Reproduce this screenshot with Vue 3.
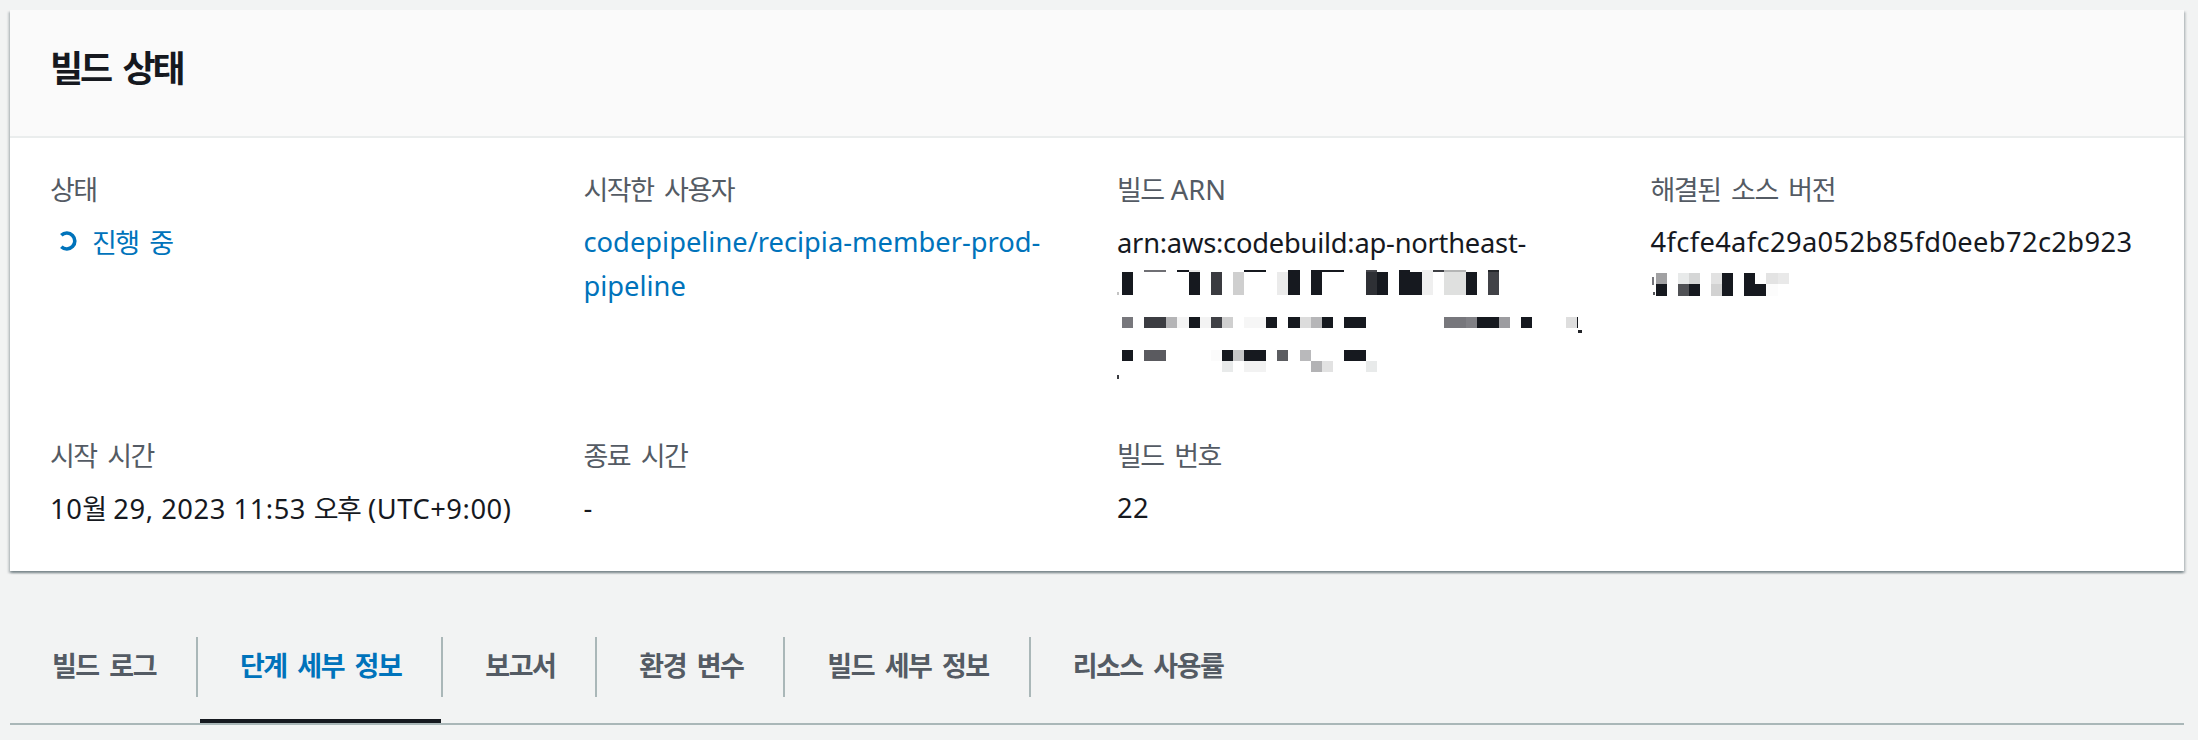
<template>
  <div class="page">
    <section class="card">
      <header class="card-head">
        <h2>빌드 상태</h2>
      </header>
      <div class="details">
        <div class="cell">
          <div class="label ko">상태</div>
          <div class="status">
            <svg class="spinner" viewBox="0 0 20 20" width="20" height="20">
              <path d="M4.3 4.2A8 8 0 1 1 4.3 15.8" fill="none" stroke="#0073bb" stroke-width="3.6" />
            </svg>
            <span class="ko">진행 중</span>
          </div>
        </div>
        <div class="cell">
          <div class="label ko">시작한 사용자</div>
          <a class="value link">codepipeline/recipia-member-prod-pipeline</a>
        </div>
        <div class="cell">
          <div class="label"><span class="ko">빌드</span> ARN</div>
          <div class="value arn-text">arn:aws:codebuild:ap-northeast-</div>
          <div class="mosaic arn">
            <i v-for="(b, i) in arnBlocks" :key="i" :style="blockStyle(b)"></i>
          </div>
        </div>
        <div class="cell">
          <div class="label ko">해결된 소스 버전</div>
          <div class="value wide">4fcfe4afc29a052b85fd0eeb72c2b923</div>
          <div class="mosaic source">
            <i v-for="(b, i) in sourceBlocks" :key="i" :style="blockStyle(b)"></i>
          </div>
        </div>
        <div class="cell">
          <div class="label ko">시작 시간</div>
          <div class="value date">10<span class="ko">월</span> 29, 2023 11:53 <span class="ko">오후</span> (UTC+9:00)</div>
        </div>
        <div class="cell">
          <div class="label ko">종료 시간</div>
          <div class="value">-</div>
        </div>
        <div class="cell">
          <div class="label ko">빌드 번호</div>
          <div class="value wide">22</div>
        </div>
      </div>
    </section>

    <nav class="tabs">
      <a
        v-for="(tab, i) in tabs"
        :key="tab"
        class="tab"
        :class="{ active: i === 1 }"
      >
        <span class="tab-label">{{ tab }}</span>
      </a>
    </nav>
  </div>
</template>

<script setup>
const tabs = ['빌드 로그', '단계 세부 정보', '보고서', '환경 변수', '빌드 세부 정보', '리소스 사용률']

const dark = '#16191f'

// c: column, s: column span, r: row, h: row span, k: colour, w/t: fixed size of a sliver
const arnBlocks = [
  // first blurred line
  { c: 0, r: 2, k: '#c4c4c4', w: 2, t: 3, m: '20px 0 0 0' },
  { c: 1, r: 2, k: dark },
  { c: 3, s: 2, r: 1, k: '#6f6f74' },
  { c: 6, r: 1, k: dark },
  { c: 7, r: 1, k: '#e8e8e8' },
  { c: 7, r: 2, k: dark },
  { c: 9, r: 2, k: '#3a3b40' },
  { c: 11, r: 2, k: '#cfcfcf' },
  { c: 12, s: 2, r: 1, k: dark },
  { c: 15, r: 2, k: '#ebebeb' },
  { c: 16, r: 1, h: 2, k: dark },
  { c: 18, r: 1, h: 2, k: dark },
  { c: 19, s: 2, r: 1, k: dark },
  { c: 23, r: 1, k: '#47484d' },
  { c: 23, r: 2, k: '#2e3035' },
  { c: 24, r: 2, k: dark },
  { c: 26, r: 1, h: 2, k: dark },
  { c: 27, r: 2, k: dark },
  { c: 28, r: 1, h: 2, k: '#efefef' },
  { c: 29, r: 1, k: '#3f4045' },
  { c: 30, s: 2, r: 1, k: '#b4b5b5' },
  { c: 30, s: 2, r: 2, k: '#dfe0df' },
  { c: 32, r: 2, k: dark },
  { c: 34, r: 1, k: '#232529' },
  { c: 34, r: 2, k: '#414247' },
  // second blurred line
  { c: 1, r: 4, k: '#77777c' },
  { c: 3, s: 2, r: 4, k: '#3c3d42' },
  { c: 5, r: 4, k: '#b4b4b6' },
  { c: 6, r: 4, k: '#f4f4f4' },
  { c: 7, r: 4, k: dark },
  { c: 8, r: 4, k: '#f3f3f3' },
  { c: 9, r: 4, k: '#3f4045' },
  { c: 10, r: 4, k: '#cfcfcf' },
  { c: 12, s: 2, r: 4, k: '#f6f6f6' },
  { c: 14, r: 4, k: dark },
  { c: 16, r: 4, k: dark },
  { c: 17, r: 4, k: '#dcdcdc' },
  { c: 18, r: 4, k: '#b6b6b8' },
  { c: 19, r: 4, k: dark },
  { c: 21, s: 2, r: 4, k: dark },
  { c: 30, s: 2, r: 4, k: '#77777c' },
  { c: 32, r: 4, k: '#808085' },
  { c: 33, s: 2, r: 4, k: dark },
  { c: 35, r: 4, k: '#9c9ca0' },
  { c: 37, r: 4, k: dark },
  { c: 41, r: 4, k: '#dedede' },
  { c: 42, r: 4, k: dark, w: 1 },
  { c: 42, r: 5, k: '#232529', w: 4, t: 3, m: '2px 0 0 1px' },
  // third blurred line
  { c: 1, r: 6, k: dark },
  { c: 3, s: 2, r: 6, k: '#5a5a5f' },
  { c: 9, r: 6, k: '#fbfbfb' },
  { c: 10, r: 6, k: dark },
  { c: 11, r: 6, k: '#c6c7c8' },
  { c: 12, s: 2, r: 6, k: dark },
  { c: 15, r: 6, k: '#5c5d61' },
  { c: 17, r: 6, k: '#b9b9bb' },
  { c: 21, s: 2, r: 6, k: dark },
  { c: 10, r: 7, k: '#e8eaea' },
  { c: 12, s: 2, r: 7, k: '#f2f2f2' },
  { c: 18, r: 7, k: '#b3b3b5' },
  { c: 19, r: 7, k: '#e2e2e2' },
  { c: 23, r: 7, k: '#e8eaea' },
  { c: 0, r: 8, k: '#3a3b40', w: 2, t: 4, m: '3px 0 0 0' }
]

const sourceBlocks = [
  // clipped digit just left of the blur
  { c: 0, r: 1, k: '#77777c', w: 2, t: 8, m: '4px 0 0 1px' },
  { c: 0, r: 2, k: '#55565a', w: 2, t: 3, m: '8px 0 0 2px' },
  { c: 1, r: 1, k: '#a1a1a3' },
  { c: 3, r: 1, k: '#e8eaea' },
  { c: 4, r: 1, k: '#d5d6d6' },
  { c: 6, r: 1, k: '#e2e2e2' },
  { c: 7, r: 1, k: dark },
  { c: 9, r: 1, k: dark },
  { c: 11, r: 1, k: '#e3e3e3' },
  { c: 12, r: 1, k: '#e9e9e9' },
  { c: 1, r: 2, k: dark },
  { c: 3, r: 2, k: '#505155' },
  { c: 4, r: 2, k: dark },
  { c: 6, r: 2, k: '#d2d2d2' },
  { c: 7, r: 2, k: dark },
  { c: 9, s: 2, r: 2, k: dark },
  { c: 11, r: 2, k: '#fcfcfc' }
]

const blockStyle = (b) => {
  const style = {
    gridColumn: `${b.c + 1} / span ${b.s || 1}`,
    gridRow: `${b.r} / span ${b.h || 1}`,
    background: b.k
  }
  if (b.w) {
    style.width = b.w + 'px'
    style.justifySelf = 'start'
  }
  if (b.t) {
    style.height = b.t + 'px'
    style.margin = b.m
  }
  return style
}
</script>

<style>
html,
body {
  background: #f2f3f3;
}
</style>

<style scoped>
.page {
  height: 740px;
  box-sizing: border-box;
  padding: 10px 14px 0 10px;
  background: #f2f3f3;
  color: #16191f;
  font-family: "Noto Sans", "Noto Sans CJK KR", sans-serif;
  font-size: 27.3px;
  line-height: 44px;
  overflow: hidden;
}

.ko {
  font-family: "Noto Sans CJK KR", sans-serif;
  font-size: 27px;
  letter-spacing: -1.5px;
  word-spacing: 6px;
}

.card {
  background: #fff;
  box-shadow: 0 2px 2px 0 rgba(0, 28, 36, 0.3), 2px 2px 2px 0 rgba(0, 28, 36, 0.15), -2px 2px 2px 0 rgba(0, 28, 36, 0.15);
}

.card-head {
  height: 128px;
  box-sizing: border-box;
  padding: 0 0 14px 40px;
  display: flex;
  align-items: center;
  background: #fafafa;
  border-bottom: 2px solid #eaeded;
}

.card-head h2 {
  margin: 0;
  font-family: "Noto Sans CJK KR", sans-serif;
  font-size: 36px;
  font-weight: 700;
  letter-spacing: -3px;
  word-spacing: 7px;
}

.details {
  display: grid;
  grid-template-columns: repeat(4, 1fr);
  row-gap: 38px;
  padding: 29px 20px 40px;
}

.cell {
  padding: 0 20px;
  min-width: 0;
}

.label {
  color: #545b64;
  margin-bottom: 9px;
}

.value {
  overflow-wrap: anywhere;
}

.value.arn-text {
  letter-spacing: -0.23px;
}

.value.wide {
  letter-spacing: 0.35px;
}

.value.date {
  letter-spacing: 0.55px;
}

.link {
  display: block;
  color: #0073bb;
  text-decoration: none;
}

.status {
  display: flex;
  align-items: center;
  color: #0073bb;
}

.spinner {
  margin: -3px 15px 0 7px;
}

.mosaic {
  display: grid;
  margin-top: 5px;
}

.mosaic.arn {
  grid-template-columns: 5px repeat(42, 11.1px);
  grid-template-rows: 2px 23px 22px 11px 22px 11px 11px 10px;
  height: 125px;
}

.mosaic.source {
  grid-template-columns: 5px repeat(12, 11.1px);
  grid-template-rows: 11px 12px;
  margin-top: 9px;
}

.tabs {
  display: flex;
  margin-top: 66px;
  padding-top: 0;
  border-bottom: 2px solid #aab7b8;
}

.tab {
  position: relative;
  padding-bottom: 26px;
  color: #545b64;
  font-family: "Noto Sans CJK KR", sans-serif;
  font-size: 27px;
  font-weight: 700;
  letter-spacing: -1.5px;
  word-spacing: 6px;
}

.tab-label {
  display: block;
  height: 60px;
  line-height: 56px;
  padding: 0 40px 0 42px;
  border-right: 2px solid #aab7b8;
}

.tab:last-child .tab-label {
  border-right: none;
}

.tab.active {
  color: #0073bb;
}

.tab.active::after {
  content: "";
  position: absolute;
  left: 2px;
  right: 2px;
  bottom: 0;
  height: 4px;
  background: #16191f;
}
</style>
